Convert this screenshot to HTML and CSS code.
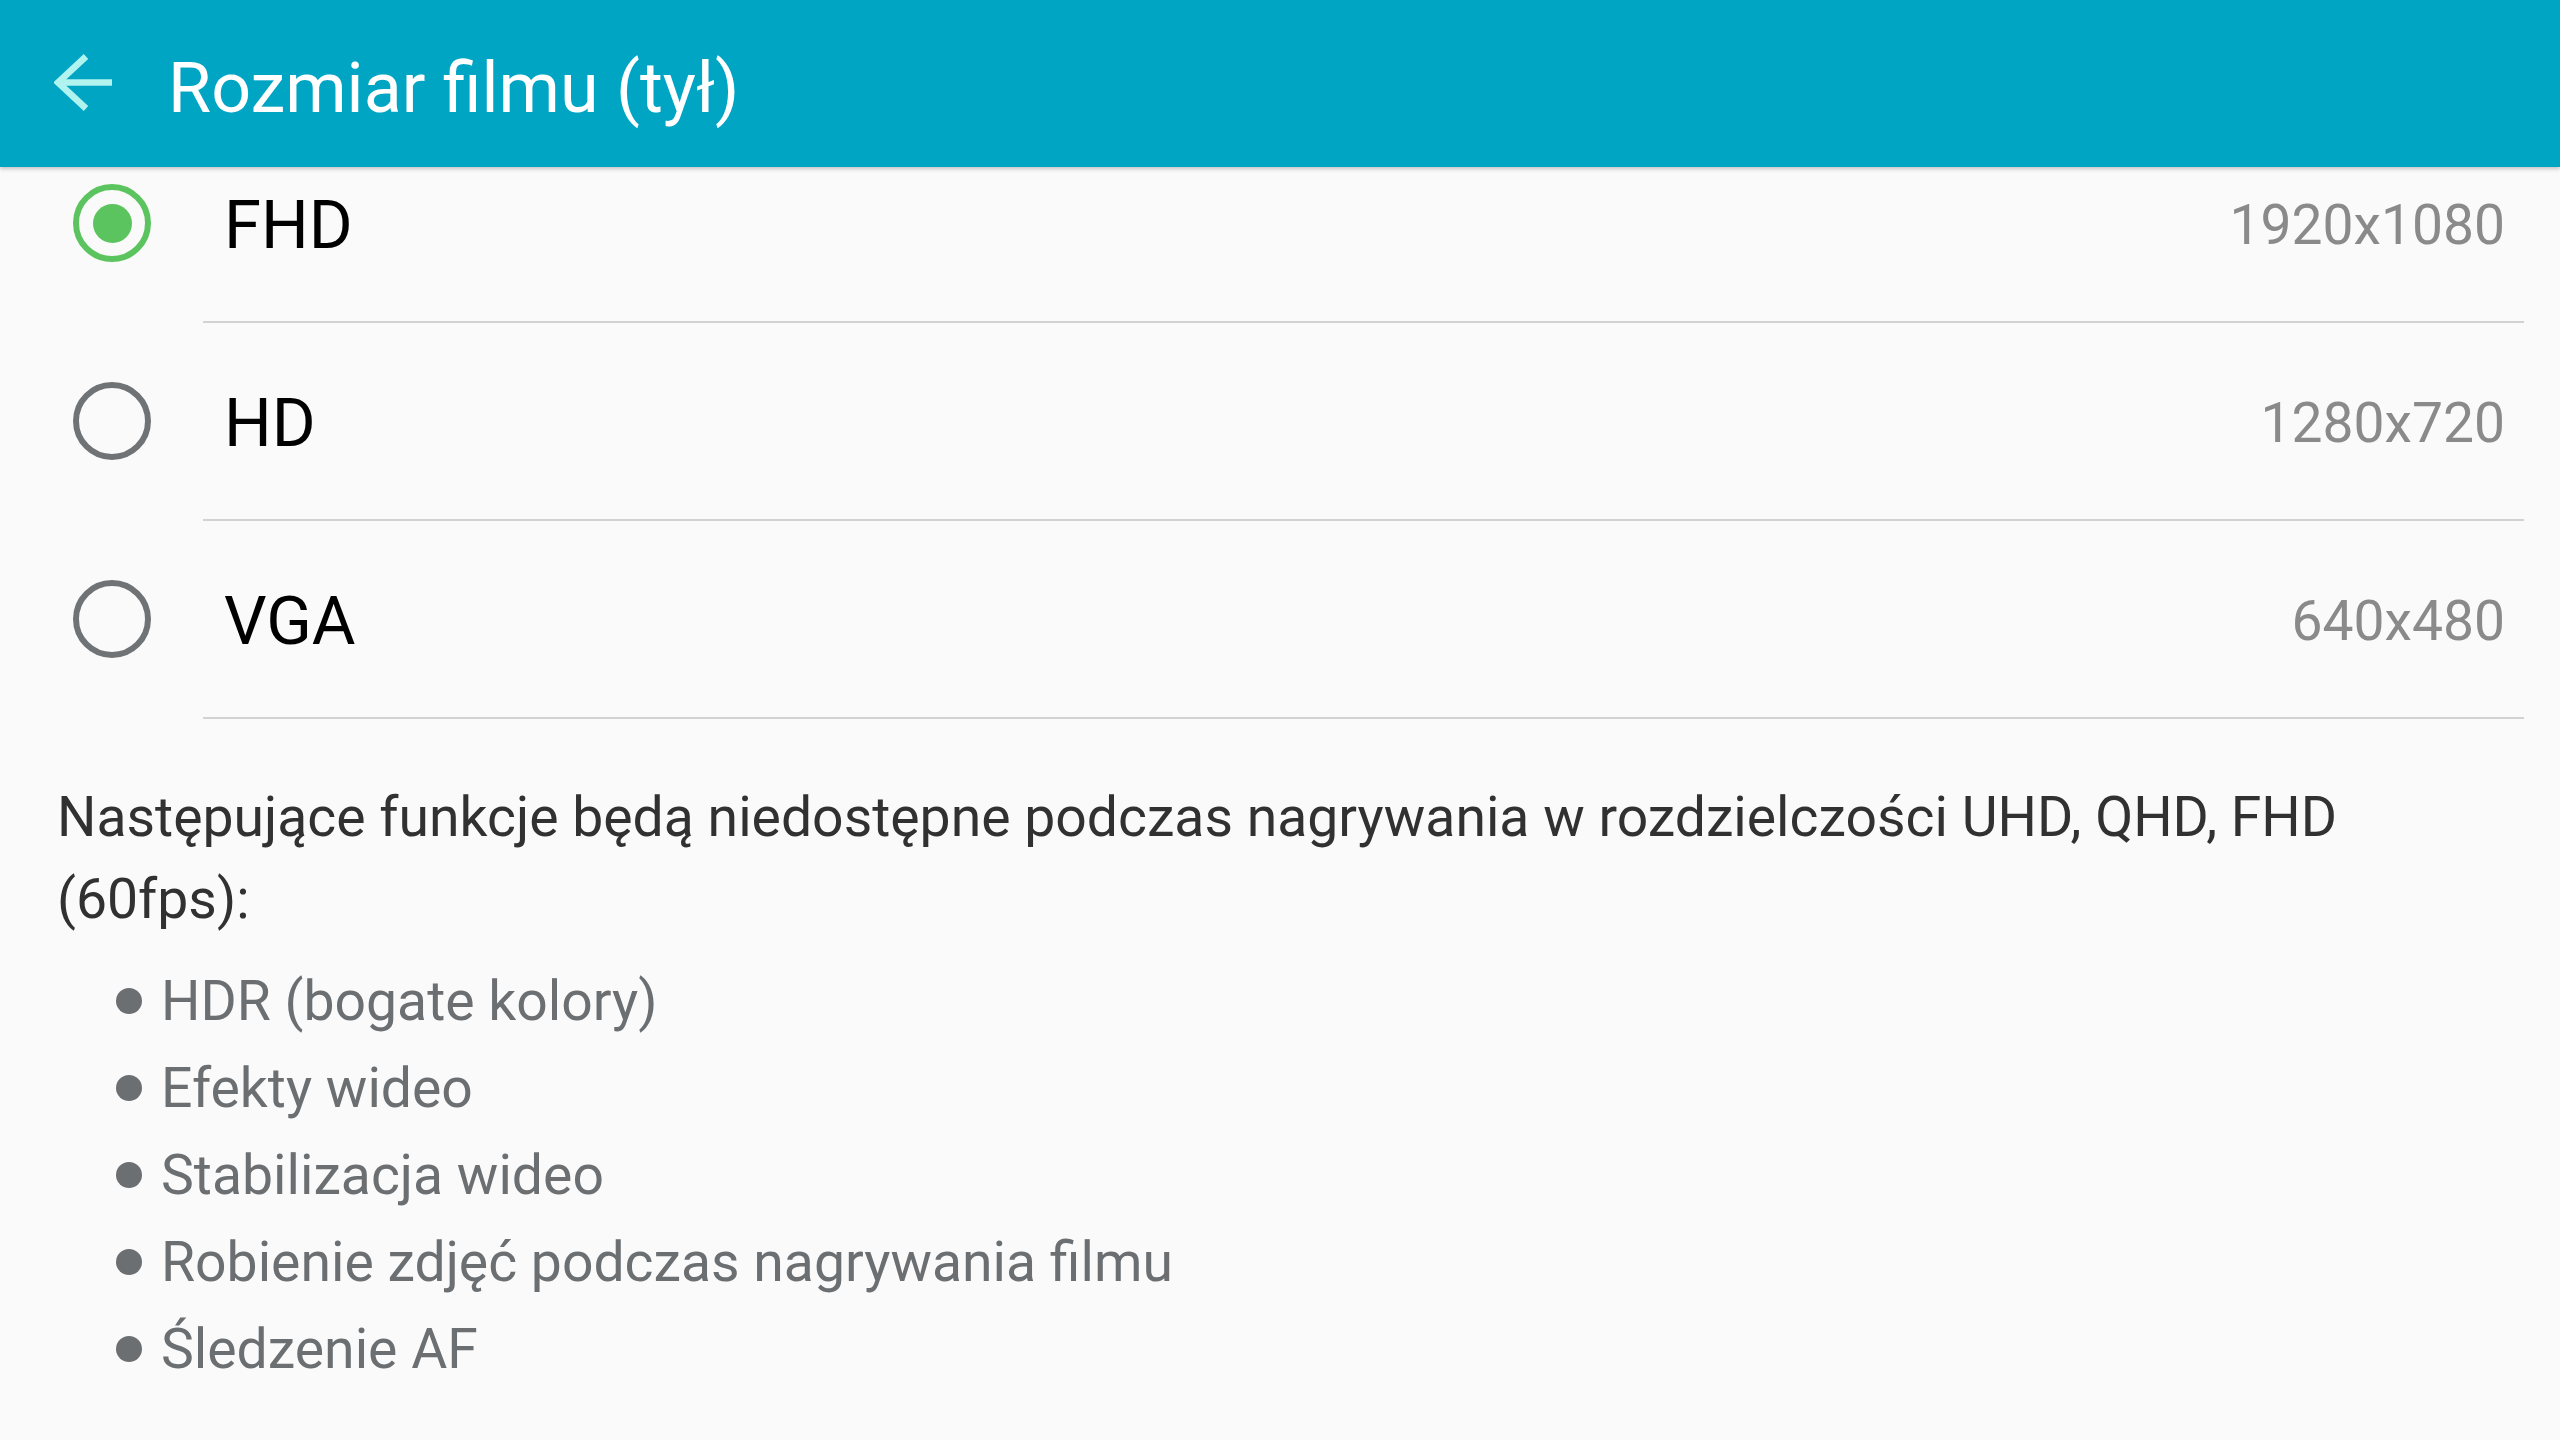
FILE: index.html
```html
<!DOCTYPE html>
<html lang="pl">
<head>
<meta charset="utf-8">
<title>Rozmiar filmu (tył)</title>
<link rel="stylesheet" href="styles.css">
</head>
<body>
<header class="appbar">
  <span class="back" aria-label="Wstecz">
    <svg width="60" height="60" viewBox="0 0 60 60">
      <path d="M3.5 28.5 H58" fill="none" stroke="#b0f3ef" stroke-width="6.5"/>
      <path d="M32 2.5 L4 28.5 L32 54.5" fill="none" stroke="#b0f3ef" stroke-width="6.5" stroke-linejoin="miter"/>
    </svg>
  </span>
  <h1 class="title">Rozmiar filmu (tył)</h1>
</header>
<main class="content">
  <ul class="options">
    <li class="option">
      <div class="option-main">
        <span class="radio checked"><span class="dot"></span></span>
        <span class="label">FHD</span>
        <span class="value">1920x1080</span>
      </div>
      <div class="divider"></div>
    </li>
    <li class="option">
      <div class="option-main">
        <span class="radio"></span>
        <span class="label">HD</span>
        <span class="value">1280x720</span>
      </div>
      <div class="divider"></div>
    </li>
    <li class="option">
      <div class="option-main">
        <span class="radio"></span>
        <span class="label">VGA</span>
        <span class="value">640x480</span>
      </div>
      <div class="divider"></div>
    </li>
  </ul>
  <p class="note">Następujące funkcje będą niedostępne podczas nagrywania w rozdzielczości UHD, QHD, FHD (60fps):</p>
  <ul class="features">
    <li>HDR (bogate kolory)</li>
    <li>Efekty wideo</li>
    <li>Stabilizacja wideo</li>
    <li>Robienie zdjęć podczas nagrywania filmu</li>
    <li>Śledzenie AF</li>
  </ul>
</main>
</body>
</html>
```
FILE: styles.css
```css
* { box-sizing: border-box; }
html, body {
  margin: 0;
  padding: 0;
  background: #fafafa;
  font-family: Roboto, "Noto Sans", "Liberation Sans", sans-serif;
  overflow: hidden;
}
.appbar {
  position: relative;
  z-index: 2;
  height: 167px;
  background: #00a5c4;
  display: flex;
  align-items: center;
  padding-left: 54px;
  box-shadow: 0 2px 4px rgba(0, 0, 0, 0.22);
}
.back {
  width: 60px;
  height: 60px;
  display: block;
}
.back svg { display: block; }
.title {
  margin: 8px 0 0 54px;
  font-weight: 400;
  font-size: 70px;
  line-height: 70px;
  color: #ffffff;
}
.content {
  margin-top: -42px;
}
.options {
  list-style: none;
  margin: 0;
  padding: 0;
}
.option-main {
  height: 196px;
  display: flex;
  align-items: center;
  padding: 0 55px 0 73px;
}
.radio {
  width: 78px;
  height: 78px;
  border-radius: 50%;
  border: 6px solid #707376;
  display: flex;
  align-items: center;
  justify-content: center;
  flex: none;
}
.radio.checked { border-color: #5bc45f; }
.radio .dot {
  width: 39px;
  height: 39px;
  border-radius: 50%;
  background: #5bc45f;
}
.label {
  margin-left: 73px;
  padding-top: 4px;
  font-size: 67px;
  line-height: 67px;
  color: #000000;
  flex: 1;
}
.value {
  padding-top: 4px;
  font-size: 55.2px;
  line-height: 56px;
  color: #8a8a8a;
}
.divider {
  height: 2px;
  margin: 0 36px 0 203px;
  background: #d2d2d2;
}
.note {
  margin: 58px 56px 0 57px;
  font-size: 55.3px;
  line-height: 82px;
  color: #313131;
}
.features {
  list-style: none;
  margin: 17px 0 0 0;
  padding: 0 0 0 116px;
  font-size: 55.3px;
  line-height: 87px;
  color: #6c6f72;
}
.features li::before {
  content: "";
  display: inline-block;
  width: 26px;
  height: 26px;
  border-radius: 50%;
  background: #6c6f72;
  margin-right: 19px;
  vertical-align: 6px;
}
```
